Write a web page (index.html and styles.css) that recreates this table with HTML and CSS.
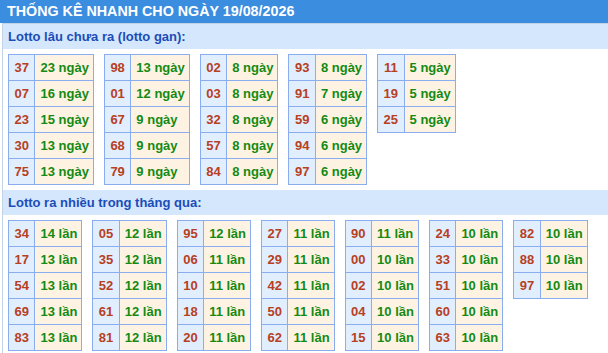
FILE: index.html
```html
<!DOCTYPE html>
<html lang="vi">
<head>
<meta charset="utf-8">
<title>Thống kê nhanh</title>
<link rel="stylesheet" href="styles.css">
</head>
<body>
<div class="title">THỐNG KÊ NHANH CHO NGÀY 19/08/2026</div>
<div class="box">
  <div class="band">Lotto lâu chưa ra (lotto gan):</div>
  <div class="tables">
    <table><tr><td class="n">37</td><td class="v">23 ngày</td></tr><tr><td class="n">07</td><td class="v">16 ngày</td></tr><tr><td class="n">23</td><td class="v">15 ngày</td></tr><tr><td class="n">30</td><td class="v">13 ngày</td></tr><tr><td class="n">75</td><td class="v">13 ngày</td></tr></table>
    <table><tr><td class="n">98</td><td class="v">13 ngày</td></tr><tr><td class="n">01</td><td class="v">12 ngày</td></tr><tr><td class="n">67</td><td class="v">9 ngày</td></tr><tr><td class="n">68</td><td class="v">9 ngày</td></tr><tr><td class="n">79</td><td class="v">9 ngày</td></tr></table>
    <table><tr><td class="n">02</td><td class="v">8 ngày</td></tr><tr><td class="n">03</td><td class="v">8 ngày</td></tr><tr><td class="n">32</td><td class="v">8 ngày</td></tr><tr><td class="n">57</td><td class="v">8 ngày</td></tr><tr><td class="n">84</td><td class="v">8 ngày</td></tr></table>
    <table><tr><td class="n">93</td><td class="v">8 ngày</td></tr><tr><td class="n">91</td><td class="v">7 ngày</td></tr><tr><td class="n">59</td><td class="v">6 ngày</td></tr><tr><td class="n">94</td><td class="v">6 ngày</td></tr><tr><td class="n">97</td><td class="v">6 ngày</td></tr></table>
    <table><tr><td class="n">11</td><td class="v">5 ngày</td></tr><tr><td class="n">19</td><td class="v">5 ngày</td></tr><tr><td class="n">25</td><td class="v">5 ngày</td></tr></table>
  </div>
  <div class="band">Lotto ra nhiều trong tháng qua:</div>
  <div class="tables">
    <table><tr><td class="n">34</td><td class="v">14 lần</td></tr><tr><td class="n">17</td><td class="v">13 lần</td></tr><tr><td class="n">54</td><td class="v">13 lần</td></tr><tr><td class="n">69</td><td class="v">13 lần</td></tr><tr><td class="n">83</td><td class="v">13 lần</td></tr></table>
    <table><tr><td class="n">05</td><td class="v">12 lần</td></tr><tr><td class="n">35</td><td class="v">12 lần</td></tr><tr><td class="n">52</td><td class="v">12 lần</td></tr><tr><td class="n">61</td><td class="v">12 lần</td></tr><tr><td class="n">81</td><td class="v">12 lần</td></tr></table>
    <table><tr><td class="n">95</td><td class="v">12 lần</td></tr><tr><td class="n">06</td><td class="v">11 lần</td></tr><tr><td class="n">10</td><td class="v">11 lần</td></tr><tr><td class="n">18</td><td class="v">11 lần</td></tr><tr><td class="n">20</td><td class="v">11 lần</td></tr></table>
    <table><tr><td class="n">27</td><td class="v">11 lần</td></tr><tr><td class="n">29</td><td class="v">11 lần</td></tr><tr><td class="n">42</td><td class="v">11 lần</td></tr><tr><td class="n">50</td><td class="v">11 lần</td></tr><tr><td class="n">62</td><td class="v">11 lần</td></tr></table>
    <table><tr><td class="n">90</td><td class="v">11 lần</td></tr><tr><td class="n">00</td><td class="v">10 lần</td></tr><tr><td class="n">02</td><td class="v">10 lần</td></tr><tr><td class="n">04</td><td class="v">10 lần</td></tr><tr><td class="n">15</td><td class="v">10 lần</td></tr></table>
    <table><tr><td class="n">24</td><td class="v">10 lần</td></tr><tr><td class="n">33</td><td class="v">10 lần</td></tr><tr><td class="n">51</td><td class="v">10 lần</td></tr><tr><td class="n">60</td><td class="v">10 lần</td></tr><tr><td class="n">63</td><td class="v">10 lần</td></tr></table>
    <table><tr><td class="n">82</td><td class="v">10 lần</td></tr><tr><td class="n">88</td><td class="v">10 lần</td></tr><tr><td class="n">97</td><td class="v">10 lần</td></tr></table>
  </div>
</div>
</body>
</html>
```

FILE: styles.css
```css
html, body {
  margin: 0;
  padding: 0;
  background: #ffffff;
  font-family: "Liberation Sans", Arial, sans-serif;
  font-weight: bold;
  overflow: hidden;
}

.title {
  height: 23px;
  line-height: 23px;
  padding-left: 7px;
  background: #3b8de0;
  color: #ffffff;
  font-size: 14.3px;
}

.box {
  margin-left: 2px;
  border-top: 1px solid #c3d3e6;
  border-left: 1px solid #c3d3e6;
}

.band {
  height: 25px;
  line-height: 25px;
  padding-left: 5px;
  background: #d4e7fc;
  color: #1b4db8;
  font-size: 13px;
}

.tables {
  display: flex;
  align-items: flex-start;
  gap: 10px;
  padding: 5px 0 5px 5px;
}

table {
  border-collapse: collapse;
  font-size: 13px;
}

td {
  height: 25px;
  padding: 0;
  border: 1px solid #89adef;
  white-space: nowrap;
}

td.n {
  padding: 0 5.5px;
  text-align: center;
  background: #e1eefe;
  color: #b6401f;
}

td.v {
  padding: 0 4px 0 5px;
  background: #fef3e2;
  color: #148a14;
}
```
